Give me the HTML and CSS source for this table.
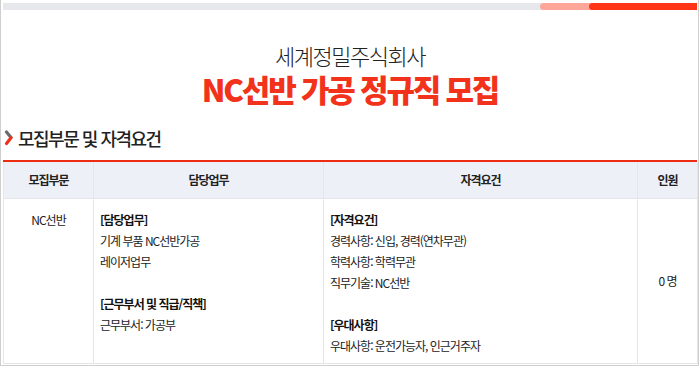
FILE: index.html
```html
<!DOCTYPE html>
<html lang="ko">
<head>
<meta charset="utf-8">
<link rel="stylesheet" href="styles.css">
</head>
<body>
<div class="frame">
  <div class="progress">
    <div class="progress-fill"><div class="progress-strong"></div></div>
  </div>
  <header class="hero">
    <div class="company">세계정밀주식회사</div>
    <h1 class="headline">NC선반 가공 정규직 모집</h1>
  </header>
  <h2 class="section-title">
    <svg class="chev" width="10" height="16" viewBox="0 0 10 16" aria-hidden="true">
      <path d="M2.5 2 L7 7.5" stroke="#6b6b6b" stroke-width="3.2" stroke-linecap="round" fill="none"/>
      <path d="M7 7.8 L2.5 13.5" stroke="#f0321b" stroke-width="3.2" stroke-linecap="round" fill="none"/>
    </svg>
    <span>모집부문 및 자격요건</span>
  </h2>
  <table class="jobs">
    <colgroup>
      <col class="c1"><col class="c2"><col class="c3"><col class="c4">
    </colgroup>
    <thead>
      <tr><th>모집부문</th><th>담당업무</th><th>자격요건</th><th>인원</th></tr>
    </thead>
    <tbody>
      <tr>
        <td class="part">NC선반</td>
        <td class="desc">
          <p class="label">[담당업무]</p>
          <p>기계 부품 NC선반가공</p>
          <p>레이저업무</p>
          <p class="blank">&nbsp;</p>
          <p class="label">[근무부서 및 직급/직책]</p>
          <p>근무부서: 가공부</p>
        </td>
        <td class="desc">
          <p class="label">[자격요건]</p>
          <p>경력사항: 신입, 경력(연차무관)</p>
          <p>학력사항: 학력무관</p>
          <p>직무기술: NC선반</p>
          <p class="blank">&nbsp;</p>
          <p class="label">[우대사항]</p>
          <p>우대사항: 운전가능자, 인근거주자</p>
        </td>
        <td class="count">0 명</td>
      </tr>
    </tbody>
  </table>
</div>
</body>
</html>
```

FILE: styles.css
```css
* { box-sizing: border-box; }
html, body { margin: 0; padding: 0; background: #fff; }
body {
  font-family: "Noto Sans CJK KR", "Noto Sans", sans-serif;
  color: #222;
}
.frame {
  width: 699px;
  height: 366px;
  border: 1px solid #cfcfcf;
  border-top: 0;
  padding: 0 1px 0 2px;
  overflow: hidden;
}
.progress {
  margin-top: 3px;
  height: 7px;
  background: #e6e8ec;
  display: flex;
  justify-content: flex-end;
}
.progress-fill {
  width: 157px;
  height: 100%;
  background: #ffa69b;
  border-radius: 4px 0 0 4px;
  display: flex;
  justify-content: flex-end;
}
.progress-strong {
  width: 108px;
  height: 100%;
  background: #ff3516;
  border-radius: 4px 0 0 4px;
}
.hero {
  margin-top: 33px;
  text-align: center;
}
.company {
  font-size: 22px;
  line-height: 24px;
  font-weight: 300;
  letter-spacing: -1.5px;
  color: #222;
}
.headline {
  margin: 5px 0 0;
  font-size: 31px;
  line-height: 34px;
  font-weight: 900;
  letter-spacing: -2.2px;
  color: #f2321a;
}
.section-title {
  margin: 20px 0 0;
  padding: 0 0 10px 1px;
  height: 36px;
  border-bottom: 2px solid #ec2d12;
  display: flex;
  align-items: center;
  gap: 4px;
  font-size: 18px;
  line-height: 24px;
  font-weight: 500;
  letter-spacing: -1.5px;
  color: #222;
}
.chev { flex: none; }
.jobs {
  width: 694px;
  border-collapse: collapse;
  table-layout: fixed;
  font-size: 12px;
  letter-spacing: -1px;
}
.c1 { width: 90px; }
.c2 { width: 230px; }
.c3 { width: 314px; }
.c4 { width: 60px; }
.jobs th {
  height: 36px;
  background: #eef0f8;
  font-weight: 700;
  color: #222;
  border: 1px solid #e4e6ec;
  border-top: 0;
  padding: 0;
}
.jobs td {
  height: 165px;
  border: 1px solid #e6e6e6;
  padding: 0;
  color: #222;
}
.jobs td.part {
  vertical-align: top;
  text-align: center;
  padding-top: 10px;
  line-height: 21px;
}
.jobs td.desc {
  vertical-align: top;
  padding: 10px 6px 0 6px;
}
.jobs td.count {
  text-align: center;
  vertical-align: middle;
}
.desc p {
  margin: 0;
  line-height: 21px;
}
.desc .label { font-weight: 700; color: #111; }
```
